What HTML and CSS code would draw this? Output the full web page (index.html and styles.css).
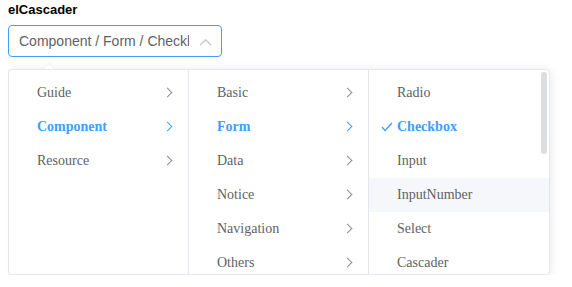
FILE: index.html
```html
<!DOCTYPE html>
<html lang="en">
<head>
    <meta charset="UTF-8">
    <title>elCascader</title>
    <link rel="stylesheet" href="styles.css">
</head>
<body>
    <h4 class="title">elCascader</h4>

    <div class="cascader">
        <span class="cascader-value">Component / Form / Checkbox</span>
        <svg class="cascader-arrow" width="13" height="8" viewBox="0 0 13 8">
            <polyline points="1,7 6.5,1.8 12,7" fill="none" stroke="#c0c4cc" stroke-width="1.2"/>
        </svg>
    </div>

    <div class="popper">
        <div class="popper-arrow"></div>
        <div class="panel">
            <ul class="menu">
                <li class="item">Guide<i class="chev"></i></li>
                <li class="item active">Component<i class="chev"></i></li>
                <li class="item">Resource<i class="chev"></i></li>
            </ul>
            <ul class="menu">
                <li class="item">Basic<i class="chev"></i></li>
                <li class="item active">Form<i class="chev"></i></li>
                <li class="item">Data<i class="chev"></i></li>
                <li class="item">Notice<i class="chev"></i></li>
                <li class="item">Navigation<i class="chev"></i></li>
                <li class="item">Others<i class="chev"></i></li>
            </ul>
            <ul class="menu last">
                <li class="item">Radio</li>
                <li class="item active">
                    <svg class="check" width="12" height="10" viewBox="0 0 12 10">
                        <polyline points="1,5 4,8.5 11,1" fill="none" stroke="#409eff" stroke-width="1.3"/>
                    </svg>Checkbox</li>
                <li class="item">Input</li>
                <li class="item hover">InputNumber</li>
                <li class="item">Select</li>
                <li class="item">Cascader</li>
                <div class="scrollbar"></div>
            </ul>
        </div>
    </div>
</body>
</html>
```

FILE: styles.css
```css
* {
    box-sizing: border-box;
}

body {
    margin: 0 8px;
    font-family: "Liberation Sans", Arial, sans-serif;
    background: #fff;
}

.title {
    margin: 0;
    padding-top: 2px;
    height: 25px;
    font-size: 13px;
    font-weight: bold;
    color: #000;
    line-height: 15px;
}

.cascader {
    position: relative;
    width: 214px;
    height: 32px;
    border: 1px solid #409eff;
    border-radius: 4px;
    padding: 0 32px 0 10px;
    display: flex;
    align-items: center;
    overflow: hidden;
}

.cascader-value {
    font-size: 14px;
    color: #606266;
    white-space: nowrap;
    overflow: hidden;
}

.cascader-arrow {
    position: absolute;
    right: 9px;
    top: 12px;
}

.popper {
    position: relative;
    margin-top: 12px;
    width: 542px;
}

.popper-arrow {
    position: absolute;
    left: 35px;
    top: -6px;
    width: 0;
    height: 0;
    border-left: 6px solid transparent;
    border-right: 6px solid transparent;
    border-bottom: 6px solid #ebeef5;
}

.popper-arrow::after {
    content: '';
    position: absolute;
    left: -5px;
    top: 1px;
    border-left: 5px solid transparent;
    border-right: 5px solid transparent;
    border-bottom: 5px solid #fff;
}

.panel {
    display: flex;
    border: 1px solid #e4e7ed;
    border-radius: 4px;
    background: #fff;
    box-shadow: 0 2px 12px rgba(0, 0, 0, 0.1);
    overflow: hidden;
}

.menu {
    position: relative;
    list-style: none;
    margin: 0;
    padding: 6px 0;
    width: 180px;
    height: 204px;
    border-right: 1px solid #e4e7ed;
    overflow: hidden;
}

.menu.last {
    border-right: none;
}

.item {
    position: relative;
    height: 34px;
    line-height: 34px;
    padding: 0 30px 0 28px;
    font-family: "Liberation Serif", "Times New Roman", serif;
    font-size: 14px;
    color: #606266;
}

.item.active {
    color: #409eff;
    font-weight: bold;
}

.item.hover {
    background: #f5f7fa;
}

.chev {
    position: absolute;
    right: 17px;
    top: 13px;
    width: 7px;
    height: 7px;
    border-top: 1.2px solid #8a8d93;
    border-right: 1.2px solid #8a8d93;
    transform: rotate(45deg);
}

.item.active .chev {
    border-color: #409eff;
}

.check {
    position: absolute;
    left: 12px;
    top: 12px;
}

.scrollbar {
    position: absolute;
    right: 2px;
    top: 2px;
    width: 6px;
    height: 82px;
    border-radius: 3px;
    background: #dcdde0;
}
```
